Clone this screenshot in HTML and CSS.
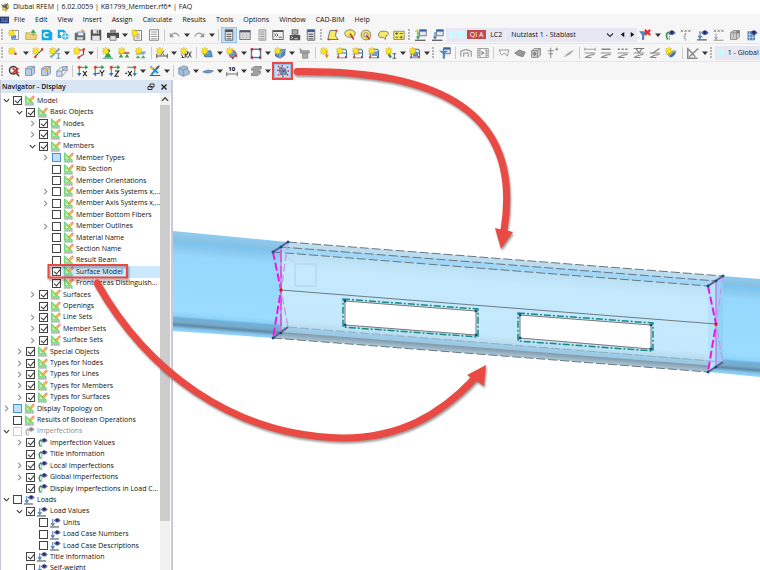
FILE: index.html
```html
<!DOCTYPE html>
<html lang="en">
<head>
    <meta charset="UTF-8">
    <meta name="viewport" content="width=device-width, initial-scale=1.0">
    <title>Dlubal RFEM</title>
    <link rel="stylesheet" href="styles.css">
</head>
<body>
    <!-- shared icon parts -->
    <svg class="defs" aria-hidden="true">
        <symbol id="star" viewBox="0 0 16 16"><path d="M5 0l1 3 3-1.500L7.500 4.500 10 5.500 7.500 6.500 9 9 6 8 5 10.500 4 8 1 9.500 2.500 6.500 0 5.500 2.500 4.500 1 1.500 4 3z" fill="#ffe81a" stroke="#d3b400" stroke-width=".6"/></symbol>
        <symbol id="eye" viewBox="0 0 16 16"><path d="M6 5q4.500-5 9 0-4.500 5-9 0z" fill="#8f96c8" stroke="#303a80"/><circle cx="10.500" cy="4.500" r="2.400" fill="#232c6b"/></symbol>
        <symbol id="model" viewBox="0 0 16 16"><path d="M2 1v11h12z" fill="#8fe88f" stroke="#4fbf5c"/><path d="M5 7v3h3z" fill="#fff"/><path d="M1 14.500h14M3 13v2M6 13v2M9 13v2M12 13v2" stroke="#7c8a86"/><path d="M7 9l1-3 4-4 2.500 2.500-4 4z" fill="#f7b93c" stroke="#a5773a" stroke-width=".5"/><path d="M12 2l1.500-1.500L16 3l-1.500 1.500z" fill="#ec8b98"/></symbol>
        <symbol id="imp" viewBox="0 0 16 16"><path d="M6 4q-5 3-1 10" fill="none" stroke="#2e9e58" stroke-width="2.200"/><path d="M7 6v9" stroke="#555" stroke-dasharray="2 1"/><use href="#eye"/></symbol>
        <symbol id="load" viewBox="0 0 16 16"><path d="M4 3v9M1.500 9L4 12.500 6.500 9" fill="none" stroke="#4b82bd" stroke-width="1.600"/><path d="M0 14.500h13" stroke="#555" stroke-width="1.600"/><use href="#eye"/></symbol>
        <symbol id="cube" viewBox="0 0 16 16"><path d="M2 5l4-3h8v9l-4 3H2z" fill="#b9cce4" stroke="#7287a5"/><path d="M2 5h8v9M10 5l4-3" fill="none" stroke="#7287a5"/></symbol>
        <symbol id="gcube" viewBox="0 0 16 16"><path d="M2 5l4-3h8v9l-4 3H2z" fill="#c9c9c9" stroke="#808080"/><path d="M2 5h8v9M10 5l4-3" fill="none" stroke="#808080"/></symbol>
        <symbol id="axis" viewBox="0 0 16 16"><path d="M3 13V3h10" fill="none" stroke="#3c8e54" stroke-width="1.400"/><path d="M0 10.500L3 15l3-4.500z" fill="#2e6fd0"/><path d="M11 0l4 3-4 3z" fill="#2f9a45"/><circle cx="3" cy="3" r="2" fill="#e0402e"/></symbol>
        <symbol id="frame" viewBox="0 0 16 16"><path d="M3 14V5l2-2h7l2 2v9M3 8h11" fill="none" stroke="#3f6ea5" stroke-width="1.400"/><path d="M1 14.500h14" stroke="#60758a"/><path d="M2 14l1-2 1 2zM12 14l1-2 1 2z" fill="#c33" stroke="#c33"/></symbol>
        <symbol id="win" viewBox="0 0 16 16"><path d="M6 1h9v8H6z" fill="#dfe9f5" stroke="#555"/><path d="M6 1h9v2.500H6z" fill="#3567a8"/></symbol>
        <symbol id="arrow-dn" viewBox="0 0 8 16"><path d="M0 6h8L4 10.500z" fill="#333"/></symbol>
        <symbol id="open" viewBox="0 0 8 8"><path d="M1 2.500l3 3 3-3" fill="none" stroke="#333" stroke-width="1.200"/></symbol>
        <symbol id="shut" viewBox="0 0 8 8"><path d="M2.500 1l3 3-3 3" fill="none" stroke="#888" stroke-width="1.200"/></symbol>
        <symbol id="diag" viewBox="0 0 16 16"><path d="M1 8h14M2 14q5-4 12-4M1 14h9" fill="none" stroke="#8a8a8a" stroke-width="1.400"/></symbol>
    </svg>

    <header class="titlebar">
        <svg class="app-icon" viewBox="0 0 16 16"><path d="M3 8l4-6 6 1 2 5-5 7-6-2z" fill="#d9a53b"/><path d="M1 3l6 3 6-5-3 7 4 3-6-1-4 4 1-6z" fill="#315f98"/><circle cx="6" cy="11" r="2.500" fill="#f1cd67"/></svg>
        <span>Dlubal RFEM | 6.02.0059 | KB1799_Member.rf6* | FAQ</span>
    </header>

    <nav class="menubar">
        <svg class="menu-icon" viewBox="0 0 16 12"><path d="M0 0h16v12H0z" fill="#263b78"/><path d="M2 4h5M2 8h12M9 4h5" stroke="#cfdcff"/></svg>
        <a href="#">File</a><a href="#">Edit</a><a href="#">View</a><a href="#">Insert</a><a href="#">Assign</a><a href="#">Calculate</a><a href="#">Results</a><a href="#">Tools</a><a href="#">Options</a><a href="#">Window</a><a href="#">CAD-BIM</a><a href="#">Help</a>
    </nav>

    <!-- file / load case toolbar -->
    <div class="toolbar">
        <i class="grip"></i>
        <button aria-label="New"><svg viewBox="0 0 16 16"><path d="M5 2h9v12H5z" fill="#fff" stroke="#777"/><path d="M4 8h7v5H4z" fill="#5a94cf"/><use href="#star"/></svg></button>
        <button aria-label="Open"><svg viewBox="0 0 16 16"><path d="M1 5h5l1 2h8v7H1z" fill="#efd27e" stroke="#c2a14b"/><path d="M11 9V3M8 5l3-4 3 4z" fill="#39a64a" stroke="#39a64a"/></svg></button>
        <button aria-label="Dlubal Center"><svg viewBox="0 0 16 16"><path d="M1 1h10l4 4v10H1z" fill="#14a9dd"/><path d="M10 5H7a3 3 0 0 0 0 6h3" fill="none" stroke="#fff" stroke-width="2"/></svg></button>
        <button aria-label="Block"><svg viewBox="0 0 16 16"><path d="M1 1h8l3 3v8H1z" fill="#14a9dd"/><circle cx="6" cy="6" r="2.500" fill="#fff"/><circle cx="11" cy="10" r="5" fill="#48b8df" stroke="#fff"/><path d="M7 10h8M11 6v8" stroke="#fff"/></svg></button>
        <button aria-label="Save package"><svg viewBox="0 0 16 16"><path d="M1 5h14v10H1z" fill="#6c6c6c"/><path d="M5 4h8v5H5z" fill="#e6ebf1" stroke="#5076a5"/><path d="M4 11h8v3H4z" fill="#ddd"/><path d="M10 1l4 3" stroke="#dc8a30" stroke-width="2"/></svg></button>
        <button aria-label="Save"><svg viewBox="0 0 16 16"><path d="M1 1h14v14H1z" fill="#575757"/><path d="M4 1h8v5H4zM3 9h10v6H3z" fill="#e5e5e5"/><path d="M9 2h2v3H9z" fill="#555"/></svg></button>
        <button aria-label="Print"><svg viewBox="0 0 16 16"><path d="M4 1h8v4H4z" fill="#888"/><path d="M0 5h16v7H0z" fill="#4d4d4d"/><path d="M4 9h8v6H4z" fill="#e4e4e4" stroke="#666"/></svg></button>
        <button class="drop" aria-label="Print options"><svg viewBox="0 0 8 16"><use href="#arrow-dn"/></svg></button>
        <button aria-label="New report"><svg viewBox="0 0 16 16"><path d="M4 2h10v13H4z" fill="#fff" stroke="#555"/><path d="M6 7h6M6 9.500h6M6 12h6" stroke="#777"/><use href="#star"/></svg></button>
        <button aria-label="Report"><svg viewBox="0 0 16 16"><path d="M2 1h12v14H2z" fill="#fff" stroke="#666"/><path d="M4 4h8M4 7h8M4 10h8M4 13h8" stroke="#777"/></svg></button>
        <i class="sep"></i>
        <button aria-label="Undo"><svg viewBox="0 0 16 16"><path d="M3 8q6-6 11 2" fill="none" stroke="#999" stroke-width="1.600"/><path d="M1 5v6h6z" fill="#999"/></svg></button>
        <button class="drop" aria-label="Undo list"><svg viewBox="0 0 8 16"><use href="#arrow-dn"/></svg></button>
        <button aria-label="Redo"><svg viewBox="0 0 16 16"><path d="M2 10q5-8 11-2" fill="none" stroke="#999" stroke-width="1.600"/><path d="M15 5v6H9z" fill="#999"/></svg></button>
        <button class="drop" aria-label="Redo list"><svg viewBox="0 0 8 16"><use href="#arrow-dn"/></svg></button>
        <i class="sep"></i>
        <button class="on" aria-label="Navigator"><svg viewBox="0 0 16 16"><path d="M3 1h10v14H3z" fill="#ddd" stroke="#555"/><path d="M3 1h10v3H3z" fill="#555"/><path d="M5 7h6M5 10h6M5 13h6" stroke="#666" stroke-width="1.500"/></svg></button>
        <button aria-label="Tables"><svg viewBox="0 0 16 16"><path d="M1 2h14v12H1z" fill="#e2e2e2" stroke="#555"/><path d="M1 2h14v2.500H1z" fill="#4b5b75"/><path d="M1 8h14M1 11h14M5 5v9M10 5v9" stroke="#bbb"/></svg></button>
        <button aria-label="Panel"><svg viewBox="0 0 16 16"><path d="M4 1h9v14H4z" fill="#ddd" stroke="#888"/><path d="M6 4h5M6 7h5M6 10h5M6 13h5" stroke="#999" stroke-width="1.500"/></svg></button>
        <button aria-label="Console"><svg viewBox="0 0 16 16"><path d="M1 2h14v12H1z" fill="#eee" stroke="#444"/><path d="M1 2h14v2H1z" fill="#555"/><path d="M3 6l2 2-2 2M6 6l2 2-2 2M9 11h4" fill="none" stroke="#333"/></svg></button>
        <button aria-label="Script"><svg viewBox="0 0 16 16"><path d="M4 1h8v6H4z" fill="#aaa" stroke="#555"/><path d="M1 8h14v7H1z" fill="#555"/><path d="M3 10l2 1.500L3 13M7 13h5" stroke="#fff" fill="none"/></svg></button>
        <button aria-label="Server"><svg viewBox="0 0 16 16"><path d="M3 1h10v14H3z" fill="#d5dde8" stroke="#555"/><path d="M3 1h10v3H3z" fill="#3b5f92"/><path d="M5 7h6M5 10h6M5 13h6" stroke="#555" stroke-width="1.500"/></svg></button>
        <i class="grip"></i>
        <button aria-label="Polygon"><svg viewBox="0 0 16 16"><path d="M4 2h9l-2 7 4 5H1z" fill="#f5ea6a" stroke="#555"/><path d="M1 14h3M11 2h3" stroke="#c33" stroke-width="2"/></svg></button>
        <button aria-label="Ellipse"><svg viewBox="0 0 16 16"><ellipse cx="8" cy="6" rx="7" ry="5" fill="#f5ea6a" stroke="#665"/><path d="M8 6l5 8" stroke="#c33" stroke-width="2"/></svg></button>
        <button aria-label="Circle"><svg viewBox="0 0 16 16"><circle cx="8" cy="8" r="6.500" fill="#f5ea6a" stroke="#665"/><circle cx="8" cy="8" r="3" fill="#f5f5f5" stroke="#665"/><path d="M8 8l5 6" stroke="#c33" stroke-width="2"/></svg></button>
        <button aria-label="Lasso"><svg viewBox="0 0 16 16"><path d="M2 8q0-6 8-5 6 0 5 4-1 2-3 2l-1 5-3-3q-6 1-6-3z" fill="#f5ea6a" stroke="#665"/></svg></button>
        <button aria-label="Area"><svg viewBox="0 0 16 16"><path d="M1 3h14v11H1z" fill="#f5ea6a" stroke="#776"/><path d="M3 6h4M5 4v4M9 6h4M3 11h4M9 11h4M11 9v4" stroke="#444"/></svg></button>
        <i class="grip"></i>
        <button aria-label="New load"><svg viewBox="0 0 16 16"><path d="M4 4v9M2 10l2 3 2-3" stroke="#3a9b4c" fill="none" stroke-width="1.500"/><path d="M0 15h14" stroke="#444" stroke-width="1.500"/><use href="#win"/><path d="M0 3h6M3 0v6" stroke="#e6c400" stroke-width="1.500"/></svg></button>
        <button aria-label="Load case"><svg viewBox="0 0 16 16"><path d="M4 4v9M2 10l2 3 2-3" stroke="#3b77b5" fill="none" stroke-width="1.500"/><path d="M0 15h14" stroke="#444" stroke-width="1.500"/><use href="#win"/></svg></button>
        <div class="loadcase">
            <i class="swatch"></i><i class="swatch"></i><span class="badge">QI A</span><label for="lc">LC2</label>
            <select id="lc"><option>Nutzlast 1 - Stablast</option></select>
            <svg class="chevron"><use href="#open"/></svg>
            <button aria-label="Previous"><svg viewBox="0 0 8 8"><path d="M6 1v6L2 4z" fill="#111"/></svg></button>
            <button aria-label="Next"><svg viewBox="0 0 8 8"><path d="M2 1v6l4-3z" fill="#111"/></svg></button>
        </div>
        <button aria-label="Clear filter"><svg viewBox="0 0 16 16"><path d="M0 3h11L7 8v6l-3 1V8z" fill="#4f86c0"/><path d="M8 1l7 7M15 1L8 8" stroke="#e5261f" stroke-width="2.500"/></svg></button>
        <button class="drop" aria-label="Filter list"><svg viewBox="0 0 8 16"><use href="#arrow-dn"/></svg></button>
        <button aria-label="Imperfections"><svg viewBox="0 0 16 16"><use href="#imp"/></svg></button>
        <button aria-label="Imperfection values"><svg viewBox="0 0 16 16"><path d="M1 1l3 3M4 1L1 4M6 1l3 3M9 1L6 4M11 1l3 3M14 1l-3 3" stroke="#777"/><path d="M8 6q-4 4 0 9" stroke="#888" stroke-width="2" fill="none" stroke-dasharray="2 1"/></svg></button>
        <button aria-label="Loads"><svg viewBox="0 0 16 16"><use href="#load"/></svg></button>
        <button aria-label="Load values"><svg viewBox="0 0 16 16"><path d="M1 1l3 3M4 1L1 4M6 1l3 3M9 1L6 4M11 1l3 3M14 1l-3 3M4 6v7M1 15h13M2 11l2 3 2-3" stroke="#777" fill="none"/></svg></button>
        <button aria-label="Results off"><svg viewBox="0 0 16 16"><use href="#gcube"/><path d="M6 2v9M10 2v9" stroke="#999"/><circle cx="12" cy="4" r="2" fill="#777"/></svg></button>
        <button aria-label="Result values"><svg viewBox="0 0 16 16"><path d="M2 3h10v12H2z" fill="#5086bb"/><path d="M2 7h10M2 11h10M5 3v12M9 3v12" stroke="#c5def2"/><use href="#eye"/></svg></button>
    </div>

    <!-- insert toolbar -->
    <div class="toolbar">
        <i class="grip"></i>
        <button aria-label="New node"><svg viewBox="0 0 16 16"><use href="#star"/><circle cx="10" cy="9" r="1.800" fill="#d3302a"/></svg></button>
        <button class="drop" aria-label="Nodes"><svg viewBox="0 0 8 16"><use href="#arrow-dn"/></svg></button>
        <button aria-label="New line"><svg viewBox="0 0 16 16"><path d="M4 13L14 3" stroke="#333" stroke-width="1.400"/><path d="M3 13h3M12 3h3" stroke="#d33" stroke-width="3"/><use href="#star"/></svg></button>
        <button aria-label="New member"><svg viewBox="0 0 16 16"><path d="M2 14L14 2" stroke="#7fa5cc" stroke-width="3"/><path d="M10 9h5M12.500 9v6M10 15h5" stroke="#4375ac"/><use href="#star"/></svg></button>
        <button class="drop" aria-label="Members"><svg viewBox="0 0 8 16"><use href="#arrow-dn"/></svg></button>
        <button aria-label="Polyline"><svg viewBox="0 0 16 16"><path d="M4 4h10v6L7 14" fill="none" stroke="#b33" stroke-width="1.600"/><path d="M13 3h3M6 14h3" stroke="#d33" stroke-width="3"/><use href="#star"/></svg></button>
        <button class="drop" aria-label="Lines"><svg viewBox="0 0 8 16"><use href="#arrow-dn"/></svg></button>
        <i class="sep"></i>
        <button aria-label="Nodal support"><svg viewBox="0 0 16 16"><path d="M3 14l5-8 5 8z" fill="#2fa24a"/><path d="M1 15h14" stroke="#286"/><circle cx="9" cy="5" r="2" fill="#287a3b"/><use href="#star"/></svg></button>
        <button aria-label="Line support"><svg viewBox="0 0 16 16"><path d="M1 8h14" stroke="#c33" stroke-width="2"/><path d="M1 14l3-5 3 5zM9 14l3-5 3 5z" fill="#2fa24a"/><use href="#star"/></svg></button>
        <button aria-label="Surface support"><svg viewBox="0 0 16 16"><path d="M1 10l4-4h10l-3 4z" fill="#79a7d3"/><path d="M1 15l3-4 3 4zM8 15l3-4 3 4z" fill="#4da565"/><use href="#star"/></svg></button>
        <i class="sep"></i>
        <button aria-label="Dimension"><svg viewBox="0 0 16 16"><path d="M1 9v6M15 9v6M1 12h14M6 5l5 6M11 5l-5 6" stroke="#444" stroke-width="1.200"/><use href="#star"/></svg></button>
        <button class="drop" aria-label="Dimensions"><svg viewBox="0 0 8 16"><use href="#arrow-dn"/></svg></button>
        <button aria-label="Note"><svg viewBox="0 0 16 16"><path d="M4 14l-2-4M2 14h4M7 14V6h3v4H7l3 4M11 6l4 8M15 6l-4 8" fill="none" stroke="#333" stroke-width="1.200"/><use href="#star"/></svg></button>
        <i class="sep"></i>
        <button aria-label="Surface"><svg viewBox="0 0 16 16"><path d="M3 6l10-1 2 8H5z" fill="#5d97cf" stroke="#345f91"/><use href="#star"/></svg></button>
        <button class="drop" aria-label="Surfaces"><svg viewBox="0 0 8 16"><use href="#arrow-dn"/></svg></button>
        <button aria-label="Curved surface"><svg viewBox="0 0 16 16"><path d="M5 5q8-3 9 6l-5 4q-7-2-4-10z" fill="#6c91c0" stroke="#a33"/><path d="M12 12h3M8 15h2" stroke="#c22" stroke-width="2"/><use href="#star"/></svg></button>
        <button class="drop" aria-label="Curved surfaces"><svg viewBox="0 0 8 16"><use href="#arrow-dn"/></svg></button>
        <button aria-label="Opening"><svg viewBox="0 0 16 16"><path d="M2 3h12v11H2z" fill="#fff" stroke="#4d80b5" stroke-width="2"/><path d="M1 3h3M12 3h3M1 14h3M12 14h3" stroke="#c22" stroke-width="3"/></svg></button>
        <button class="drop" aria-label="Openings"><svg viewBox="0 0 8 16"><use href="#arrow-dn"/></svg></button>
        <button aria-label="Solid"><svg viewBox="0 0 16 16"><path d="M2 7l6-3 7-1-1 8-6 4-6-3z" fill="#5289bf" stroke="#35628e"/><path d="M8 8v7M8 8l7-5" stroke="#bdd8ef"/><use href="#star"/></svg></button>
        <button class="drop" aria-label="Solids"><svg viewBox="0 0 8 16"><use href="#arrow-dn"/></svg></button>
        <button aria-label="Block solid"><svg viewBox="0 0 16 16"><path d="M3 5h12v3H3zM6 8h7v7H6z" fill="#ababab" stroke="#888"/><path d="M2 2l4 4" stroke="#999" stroke-width="2"/></svg></button>
        <i class="sep"></i>
        <button aria-label="Nodal load"><svg viewBox="0 0 16 16"><path d="M9 4v9M7 10l2 4 2-4" stroke="#d39b1e" fill="none" stroke-width="1.600"/><use href="#star"/></svg></button>
        <button aria-label="Member load"><svg viewBox="0 0 16 16"><use href="#frame"/><use href="#star"/></svg></button>
        <button aria-label="Line load"><svg viewBox="0 0 16 16"><use href="#frame"/><path d="M6 5v5M9 5v5" stroke="#c44"/><use href="#star"/></svg></button>
        <button aria-label="Surface load"><svg viewBox="0 0 16 16"><use href="#frame"/><path d="M5 8l8-3v7H5z" fill="#6f9dcb"/><use href="#star"/></svg></button>
        <button aria-label="Imperfection"><svg viewBox="0 0 16 16"><path d="M7 3q-5 5 1 11" stroke="#2e8e4b" stroke-width="3" fill="none"/><path d="M10 9h5M12.500 9v6M10 15h5" stroke="#333"/><use href="#star"/></svg></button>
        <button class="drop" aria-label="More imperfections"><svg viewBox="0 0 8 16"><use href="#arrow-dn"/></svg></button>
        <button aria-label="Load wizard"><svg viewBox="0 0 16 16"><use href="#frame"/><path d="M7 4l5 4v5H5z" fill="#5689bd"/><use href="#star"/></svg></button>
        <button class="drop" aria-label="Load wizards"><svg viewBox="0 0 8 16"><use href="#arrow-dn"/></svg></button>
        <i class="grip"></i>
        <button aria-label="Result filter"><svg viewBox="0 0 16 16"><use href="#win"/><path d="M0 5h12L8 9v6l-3 1V9z" fill="#5289c2"/></svg></button>
        <i class="sep"></i>
        <button aria-label="Deformation"><svg viewBox="0 0 16 16"><path d="M1 13V6q7-5 14 0v7M5 13V8h6v5" fill="none" stroke="#999" stroke-width="1.500"/></svg></button>
        <button aria-label="Animation"><svg viewBox="0 0 16 16"><path d="M1 2h14v12H1zM4 2v12M12 2v12M1 5h3M1 8h3M1 11h3M12 5h3M12 8h3M12 11h3" fill="none" stroke="#888"/><path d="M6 5l4 3-4 3z" fill="#888"/></svg></button>
        <i class="sep"></i>
        <button aria-label="Member results"><svg viewBox="0 0 16 16"><path d="M1 4h14M2 4q2 9 4 6t4-1q3 8 4-5" fill="none" stroke="#999" stroke-width="1.300"/></svg></button>
        <button aria-label="Surface results"><svg viewBox="0 0 16 16"><path d="M1 8l6-4 8 3-3 6-7-2z" fill="#999" stroke="#777"/></svg></button>
        <button aria-label="Solid results"><svg viewBox="0 0 16 16"><use href="#gcube"/><circle cx="6" cy="9" r="2.500" fill="#888"/></svg></button>
        <button aria-label="Sections"><svg viewBox="0 0 16 16"><path d="M5 1v14M1 5h8M2 9h6M11 3h4M13 1v4" stroke="#888" stroke-width="1.300"/></svg></button>
        <button aria-label="Clipping"><svg viewBox="0 0 16 16"><path d="M1 14Q6 6 15 4L9 10z" fill="#a9a9a9"/></svg></button>
        <i class="sep"></i>
        <button aria-label="Diagram 1"><svg viewBox="0 0 16 16"><path d="M1 3h14M1 1v4M15 1v4" stroke="#888"/><use href="#diag"/></svg></button>
        <button aria-label="Diagram 2"><svg viewBox="0 0 16 16"><path d="M2 3h12" stroke="#888" stroke-width="2"/><use href="#diag"/></svg></button>
        <button aria-label="Diagram 3"><svg viewBox="0 0 16 16"><path d="M1 3h14" stroke="#888" stroke-width="2" stroke-dasharray="3 2"/><use href="#diag"/></svg></button>
        <button aria-label="Diagram 4"><svg viewBox="0 0 16 16"><path d="M1 2h14M4 2l4 6M12 2L8 8" stroke="#777" stroke-width="1.500"/><use href="#diag"/></svg></button>
        <button aria-label="Diagram 5"><svg viewBox="0 0 16 16"><path d="M4 9l10-7" stroke="#888" stroke-width="2"/><use href="#diag"/></svg></button>
        <button aria-label="New section"><svg viewBox="0 0 16 16"><path d="M3 10q6-7 12-5-1 8-8 9z" fill="#3c70c4"/><path d="M5 12q4-6 10-7" stroke="#f0d23c" fill="none" stroke-width="1.500"/><use href="#star"/></svg></button>
        <i class="sep"></i>
        <button aria-label="Result display"><svg viewBox="0 0 16 16"><path d="M1 1v14h13M2 3l9 10M3 13L15 2" fill="none" stroke="#888" stroke-width="2"/></svg></button>
        <button class="drop" aria-label="Result displays"><svg viewBox="0 0 8 16"><use href="#arrow-dn"/></svg></button>
        <i class="grip"></i>
        <div class="coord"><i class="swatch"></i><label for="cs" class="hidden">System</label><select id="cs"><option>1 - Global</option></select></div>
    </div>

    <!-- view toolbar -->
    <div class="toolbar view">
        <i class="grip"></i>
        <button aria-label="Zoom off"><svg viewBox="0 0 16 16"><circle cx="7" cy="7" r="5" fill="#eee" stroke="#444" stroke-width="2"/><path d="M11 11l4 4" stroke="#444" stroke-width="2"/><path d="M6 4l8 7M14 4l-8 7" stroke="#d92a22" stroke-width="2.200"/></svg></button>
        <button aria-label="Show all"><svg viewBox="0 0 16 16"><use href="#cube"/></svg></button>
        <button aria-label="Previous view"><svg viewBox="0 0 16 16"><use href="#cube"/><path d="M9 3l3 1-4 5-2-1z" fill="#eeb33e"/></svg></button>
        <button aria-label="Perspective"><svg viewBox="0 0 16 16"><path d="M1 8h7v7H1zM9 2h6v5H9zM1 8l8-6M8 8l7-6M8 15l7-8" fill="#cfdcee" stroke="#6f81a0"/></svg></button>
        <i class="sep"></i>
        <button aria-label="View X"><svg viewBox="0 0 16 16"><use href="#axis"/><path d="M8 8l5 7M13 8l-5 7" stroke="#222" stroke-width="1.500"/></svg></button>
        <button aria-label="View -Y"><svg viewBox="0 0 16 16"><use href="#axis"/><path d="M6 11h3M9 7l3 4 3-4M12 11v4" fill="none" stroke="#222" stroke-width="1.500"/></svg></button>
        <button aria-label="View Z"><svg viewBox="0 0 16 16"><use href="#axis"/><path d="M8 8h5l-5 7h5" fill="none" stroke="#222" stroke-width="1.500"/></svg></button>
        <button aria-label="View -X"><svg viewBox="0 0 16 16"><path d="M3 3h10v10" fill="none" stroke="#3c8e54" stroke-width="1.400"/><path d="M10 11l3 4 3-4z" fill="#2e6fd0"/><circle cx="13" cy="3" r="2" fill="#e0402e"/><path d="M0 11h3M4 8l5 7M9 8l-5 7" stroke="#222" stroke-width="1.500"/></svg></button>
        <button class="drop" aria-label="Views"><svg viewBox="0 0 8 16"><use href="#arrow-dn"/></svg></button>
        <button aria-label="Work plane"><svg viewBox="0 0 16 16"><path d="M2 2l10 9M13 2L3 13" stroke="#2690cf" stroke-width="2.500"/><path d="M1 14h14M9 5l5-4" stroke="#555" stroke-width="1.500"/><circle cx="4" cy="4" r="2" fill="#e4c421"/></svg></button>
        <button class="drop" aria-label="Work planes"><svg viewBox="0 0 8 16"><use href="#arrow-dn"/></svg></button>
        <i class="sep"></i>
        <button aria-label="Render mode"><svg viewBox="0 0 16 16"><path d="M1 4l7-3 5 2v4l2 1v4l-8 3-6-3z" fill="#a5bdd7" stroke="#6e8cae"/><path d="M7 7v8M1 4l6 3 6-3" fill="none" stroke="#6e8cae"/></svg></button>
        <button class="drop" aria-label="Render modes"><svg viewBox="0 0 8 16"><use href="#arrow-dn"/></svg></button>
        <button aria-label="Plane"><svg viewBox="0 0 16 16"><path d="M1 9q7-4 14-1-6 5-14 1z" fill="#6c9ed0" stroke="#54789c"/></svg></button>
        <button class="drop" aria-label="Planes"><svg viewBox="0 0 8 16"><use href="#arrow-dn"/></svg></button>
        <button aria-label="Dimension values"><svg viewBox="0 0 16 16"><path d="M1 9v6M15 9v6M1 12h14" stroke="#444"/><text x="3" y="8" class="icon-text">10</text></svg></button>
        <button class="drop" aria-label="Dimension options"><svg viewBox="0 0 8 16"><use href="#arrow-dn"/></svg></button>
        <button aria-label="Members display"><svg viewBox="0 0 16 16"><path d="M2 5l4-3h9v3l-4 1v2h3v3l-4 3H2v-3h3V7H2z" fill="#a2a2a2" stroke="#777"/></svg></button>
        <button class="drop" aria-label="Member displays"><svg viewBox="0 0 8 16"><use href="#arrow-dn"/></svg></button>
        <button class="on marked" aria-label="Surface model"><svg viewBox="0 0 16 16"><path d="M4 3l7 2 2 7-8 1-2-5z" fill="#8a9dbd" stroke="#5c6a88"/><path d="M4 3l9 9M11 5l-6 8M3 8h9" stroke="#4c5974"/><path d="M1 2h2M6 1h2M13 3h2M1 13h2M7 15h2M13 13h2M14 8h2M0 7h2" stroke="#d42a2a" stroke-width="2"/></svg></button>
    </div>

    <main class="workspace">
        <aside class="navigator">
            <div class="nav-head">
                <span>Navigator - Display</span>
                <button aria-label="Float"><svg viewBox="0 0 8 8"><path d="M3 1h4v3H3zM1 3.500h4v3H1z" fill="#d8e6f4" stroke="#333"/></svg></button>
                <button aria-label="Close"><svg viewBox="0 0 8 8"><path d="M1.500 1.500l5 5M6.500 1.500l-5 5" stroke="#222" stroke-width="1.400"/></svg></button>
            </div>
            <div class="nav-body">
                <ul class="tree">
                    <li><svg class="tw"><use href="#open"/></svg><label><input type="checkbox" checked><svg class="ic"><use href="#model"/></svg><span>Model</span></label></li>
                    <li class="d1"><svg class="tw"><use href="#open"/></svg><label><input type="checkbox" checked><svg class="ic"><use href="#model"/></svg><span>Basic Objects</span></label></li>
                    <li class="d2"><svg class="tw"><use href="#shut"/></svg><label><input type="checkbox" checked><svg class="ic"><use href="#model"/></svg><span>Nodes</span></label></li>
                    <li class="d2"><svg class="tw"><use href="#shut"/></svg><label><input type="checkbox" checked><svg class="ic"><use href="#model"/></svg><span>Lines</span></label></li>
                    <li class="d2"><svg class="tw"><use href="#open"/></svg><label><input type="checkbox" checked><svg class="ic"><use href="#model"/></svg><span>Members</span></label></li>
                    <li class="d3"><svg class="tw"><use href="#shut"/></svg><label><input type="checkbox" class="part"><svg class="ic"><use href="#model"/></svg><span>Member Types</span></label></li>
                    <li class="d3"><svg class="tw"></svg><label><input type="checkbox"><svg class="ic"><use href="#model"/></svg><span>Rib Section</span></label></li>
                    <li class="d3"><svg class="tw"></svg><label><input type="checkbox"><svg class="ic"><use href="#model"/></svg><span>Member Orientations</span></label></li>
                    <li class="d3"><svg class="tw"><use href="#shut"/></svg><label><input type="checkbox"><svg class="ic"><use href="#model"/></svg><span>Member Axis Systems x,...</span></label></li>
                    <li class="d3"><svg class="tw"><use href="#shut"/></svg><label><input type="checkbox"><svg class="ic"><use href="#model"/></svg><span>Member Axis Systems x,...</span></label></li>
                    <li class="d3"><svg class="tw"></svg><label><input type="checkbox"><svg class="ic"><use href="#model"/></svg><span>Member Bottom Fibers</span></label></li>
                    <li class="d3"><svg class="tw"><use href="#shut"/></svg><label><input type="checkbox"><svg class="ic"><use href="#model"/></svg><span>Member Outlines</span></label></li>
                    <li class="d3"><svg class="tw"></svg><label><input type="checkbox"><svg class="ic"><use href="#model"/></svg><span>Material Name</span></label></li>
                    <li class="d3"><svg class="tw"></svg><label><input type="checkbox"><svg class="ic"><use href="#model"/></svg><span>Section Name</span></label></li>
                    <li class="d3"><svg class="tw"></svg><label><input type="checkbox"><svg class="ic"><use href="#model"/></svg><span>Result Beam</span></label></li>
                    <li class="d3 selected"><svg class="tw"></svg><label><input type="checkbox" checked><svg class="ic"><use href="#model"/></svg><span>Surface Model</span></label></li>
                    <li class="d3"><svg class="tw"></svg><label><input type="checkbox" checked><svg class="ic"><use href="#model"/></svg><span>Front Areas Distinguish...</span></label></li>
                    <li class="d2"><svg class="tw"><use href="#shut"/></svg><label><input type="checkbox" checked><svg class="ic"><use href="#model"/></svg><span>Surfaces</span></label></li>
                    <li class="d2"><svg class="tw"></svg><label><input type="checkbox" checked><svg class="ic"><use href="#model"/></svg><span>Openings</span></label></li>
                    <li class="d2"><svg class="tw"><use href="#shut"/></svg><label><input type="checkbox" checked><svg class="ic"><use href="#model"/></svg><span>Line Sets</span></label></li>
                    <li class="d2"><svg class="tw"><use href="#shut"/></svg><label><input type="checkbox" checked><svg class="ic"><use href="#model"/></svg><span>Member Sets</span></label></li>
                    <li class="d2"><svg class="tw"><use href="#shut"/></svg><label><input type="checkbox" checked><svg class="ic"><use href="#model"/></svg><span>Surface Sets</span></label></li>
                    <li class="d1"><svg class="tw"><use href="#shut"/></svg><label><input type="checkbox" checked><svg class="ic"><use href="#model"/></svg><span>Special Objects</span></label></li>
                    <li class="d1"><svg class="tw"><use href="#shut"/></svg><label><input type="checkbox" checked><svg class="ic"><use href="#model"/></svg><span>Types for Nodes</span></label></li>
                    <li class="d1"><svg class="tw"><use href="#shut"/></svg><label><input type="checkbox" checked><svg class="ic"><use href="#model"/></svg><span>Types for Lines</span></label></li>
                    <li class="d1"><svg class="tw"><use href="#shut"/></svg><label><input type="checkbox" checked><svg class="ic"><use href="#model"/></svg><span>Types for Members</span></label></li>
                    <li class="d1"><svg class="tw"><use href="#shut"/></svg><label><input type="checkbox" checked><svg class="ic"><use href="#model"/></svg><span>Types for Surfaces</span></label></li>
                    <li><svg class="tw"><use href="#shut"/></svg><label><input type="checkbox" class="part"><svg class="ic"><use href="#model"/></svg><span>Display Topology on</span></label></li>
                    <li><svg class="tw"></svg><label><input type="checkbox"><svg class="ic"><use href="#model"/></svg><span>Results of Boolean Operations</span></label></li>
                    <li class="off"><svg class="tw"><use href="#open"/></svg><label><input type="checkbox" disabled><svg class="ic"><use href="#imp"/></svg><span>Imperfections</span></label></li>
                    <li class="d1"><svg class="tw"><use href="#shut"/></svg><label><input type="checkbox" checked><svg class="ic"><use href="#imp"/></svg><span>Imperfection Values</span></label></li>
                    <li class="d1"><svg class="tw"></svg><label><input type="checkbox" checked><svg class="ic"><use href="#imp"/></svg><span>Title Information</span></label></li>
                    <li class="d1"><svg class="tw"><use href="#shut"/></svg><label><input type="checkbox" checked><svg class="ic"><use href="#imp"/></svg><span>Local Imperfections</span></label></li>
                    <li class="d1"><svg class="tw"><use href="#shut"/></svg><label><input type="checkbox" checked><svg class="ic"><use href="#imp"/></svg><span>Global Imperfections</span></label></li>
                    <li class="d1"><svg class="tw"></svg><label><input type="checkbox" checked><svg class="ic"><use href="#imp"/></svg><span>Display Imperfections in Load C...</span></label></li>
                    <li><svg class="tw"><use href="#open"/></svg><label><input type="checkbox"><svg class="ic"><use href="#load"/></svg><span>Loads</span></label></li>
                    <li class="d1"><svg class="tw"><use href="#open"/></svg><label><input type="checkbox" checked><svg class="ic"><use href="#load"/></svg><span>Load Values</span></label></li>
                    <li class="d2"><svg class="tw"></svg><label><input type="checkbox"><svg class="ic"><use href="#load"/></svg><span>Units</span></label></li>
                    <li class="d2"><svg class="tw"></svg><label><input type="checkbox"><svg class="ic"><use href="#load"/></svg><span>Load Case Numbers</span></label></li>
                    <li class="d2"><svg class="tw"></svg><label><input type="checkbox"><svg class="ic"><use href="#load"/></svg><span>Load Case Descriptions</span></label></li>
                    <li class="d1"><svg class="tw"></svg><label><input type="checkbox" checked><svg class="ic"><use href="#load"/></svg><span>Title Information</span></label></li>
                    <li class="d1"><svg class="tw"></svg><label><input type="checkbox"><svg class="ic"><use href="#load"/></svg><span>Self-weight</span></label></li>
                </ul>
                <div class="scrollbar">
                    <svg viewBox="0 0 8 8"><path d="M1.500 5.500L4 3l2.500 2.500" fill="none" stroke="#444"/></svg>
                    <div class="thumb"></div>
                    <div class="rest"></div>
                </div>
            </div>
        </aside>

        <section class="viewport">
            <svg viewBox="173 80 587 490" preserveAspectRatio="xMinYMin slice">
                <defs>
                    <linearGradient id="solid" gradientUnits="userSpaceOnUse" x1="0" y1="217" x2="0" y2="317" gradientTransform="skewY(4.470)">
                        <stop offset="0" stop-color="#8fcdf1"/><stop offset=".11" stop-color="#86c0e2"/><stop offset=".12" stop-color="#76c6fb"/><stop offset=".15" stop-color="#88c6ec"/><stop offset=".25" stop-color="#96d8fd"/><stop offset=".8" stop-color="#9adcff"/><stop offset=".85" stop-color="#8dd2fa"/><stop offset=".87" stop-color="#70b0da"/><stop offset=".91" stop-color="#76abc9"/><stop offset=".94" stop-color="#5f89a6"/><stop offset=".97" stop-color="#83c3ea"/><stop offset="1" stop-color="#94d6fb"/>
                    </linearGradient>
                    <linearGradient id="clear" gradientUnits="userSpaceOnUse" x1="0" y1="217" x2="0" y2="317" gradientTransform="skewY(4.470)">
                        <stop offset="0" stop-color="#bcdef1"/><stop offset=".07" stop-color="#bbdcee"/><stop offset=".08" stop-color="#a3d7f7"/><stop offset=".135" stop-color="#a3d7f7"/><stop offset=".14" stop-color="#bce0f3"/><stop offset=".28" stop-color="#c5e9fd"/><stop offset=".8" stop-color="#c5e9fc"/><stop offset=".875" stop-color="#b8dced"/><stop offset=".88" stop-color="#9fcdea"/><stop offset=".925" stop-color="#9bc8e3"/><stop offset=".935" stop-color="#849cac"/><stop offset="1" stop-color="#aecbdd"/>
                    </linearGradient>
                </defs>
                <path d="M173 231L288 242 281 290 273 338 173 331z" fill="url(#solid)"/>
                <path d="M723 276L760 279V377L708 372 716 324z" fill="url(#solid)"/>
                <path d="M288 242L723 276 716 281V366L708 372 273 338 281 332V247z" fill="url(#clear)"/>
                <path d="M273 252L281 247V332L273 338z" fill="url(#solid)"/>
                <path d="M708 286L716 281V366L708 372z" fill="#b7e2fb"/>
                <path d="M716 281L723 276V362L716 366z" fill="#92d2f8"/>
                <g fill="none" stroke="#69767e">
                    <path d="M288 242L723 276M281 247L716 281M273 252L708 286M273 338L708 372" stroke-dasharray="9 3"/>
                    <path d="M288 327L723 362" stroke="#8fb0c2" stroke-dasharray="9 3"/>
                    <path d="M281 290L716 324" stroke="#707b81"/>
                    <path d="M295 264h21v22h-21zM284 253l11 10" stroke="#b1d2e3"/>
                    <path d="M288 242L273 252M288 327L273 338M723 276L708 286M723 362L708 372" stroke="#615987" stroke-width="2"/>
                </g>
                <g fill="#fff" stroke="#777">
                    <path d="M345 301L476 311V335L345 325zM520 315L651 325V349L520 338z"/>
                    <path d="M343 299L478 309V337L343 327zM518 313L653 323V351L518 341z" fill="none" stroke="#148b88" stroke-width="1.500" stroke-dasharray="7 2 2 2"/>
                </g>
                <g fill="none" stroke="#c184df" stroke-width="1.500">
                    <path d="M281 247V332M716 281V366"/>
                    <path d="M288 242L281 290 288 327M723 276L716 324 723 362" stroke="#bfa0ee" stroke-dasharray="8 3"/>
                    <path d="M273 252L281 290 273 338M708 286L716 324 708 372" stroke="#ee16e4" stroke-width="2" stroke-dasharray="8 3"/>
                    <path d="M281 250V332" stroke="#d94fd8" stroke-dasharray="12 4"/>
                </g>
                <path d="M272 251h2v2h-2zM280 246h2v2h-2zM287 241h2v2h-2zM272 337h2v2h-2zM280 332h2v2h-2zM707 285h2v2h-2zM715 280h2v2h-2zM722 275h2v2h-2zM707 371h2v2h-2zM715 366h2v2h-2zM344 300h2v2h-2zM475 310h2v2h-2zM475 334h2v2h-2zM344 324h2v2h-2zM519 314h2v2h-2zM650 324h2v2h-2zM650 348h2v2h-2zM519 337h2v2h-2z" fill="#164f83" stroke="#164f83" stroke-width=".6"/>
                <path d="M280 289h2v2h-2zM715 323h2v2h-2z" fill="#f00f18" stroke="#f00f18"/>
            </svg>
        </section>
    </main>

    <!-- callout arrows over the window -->
    <svg class="callouts" viewBox="0 0 760 570" aria-hidden="true">
        <g fill="none" stroke="#e94b44" stroke-width="7" stroke-linecap="round">
            <path d="M297 71.500C420 70 525 100 504 230"/>
            <path d="M97 283C145 368 230 436 343 438 400 438 440 415 474 379"/>
        </g>
        <path d="M495 228L513 232 501 249zM467 375L484 386 486 365z" fill="#e94b44"/>
        <path d="M48.500 265h78.500v12.500H48.500z" fill="none" stroke="#e94b44" stroke-width="2"/>
    </svg>
</body>
</html>
```

FILE: styles.css
```css
* {
    box-sizing: border-box;
}

body {
    margin: 0;
    height: 100vh;
    display: flex;
    flex-direction: column;
    overflow: hidden;
    position: relative;
    background: #fff;
    color: #111;
    font-family: "Open Sans", "Noto Sans", sans-serif;
    font-size: 7px;
    line-height: 10px;
}

button, select {
    font: inherit;
    color: inherit;
    border: 0;
    padding: 0;
    margin: 0;
    background: none;
    appearance: none;
}

.defs {
    position: absolute;
    width: 0;
    height: 0;
}

.hidden {
    display: none;
}

/* title and menu */
.titlebar {
    height: 14px;
    display: flex;
    align-items: center;
    gap: 3px;
    flex: none;
}

.app-icon {
    width: 10px;
    height: 12px;
}

.menubar {
    height: 12px;
    display: flex;
    align-items: center;
    gap: 10px;
    flex: none;
    background: #f6f6f6;
}

.menubar a {
    color: inherit;
    text-decoration: none;
    font-weight: 500;
}

.menu-icon {
    width: 9px;
    height: 8px;
    margin-right: -5px;
}

/* toolbars */
.toolbar {
    height: 18px;
    display: flex;
    align-items: center;
    flex: none;
    background: #f6f6f6;
    border-bottom: 1px solid #e6e6e6;
}

.toolbar > button {
    flex: 1 1 15px;
    min-width: 0;
    height: 16px;
    display: flex;
    align-items: center;
    justify-content: center;
}

.toolbar > button svg {
    width: 12px;
    height: 12px;
    flex: none;
}

.toolbar > .drop {
    flex: 0 0 8px;
}

.toolbar > .drop svg {
    width: 6px;
}

.toolbar > .on {
    background: #c4def5;
    box-shadow: inset 0 0 0 1px #98c5ed;
}

.view {
    border-bottom: 0;
}

.view > button {
    flex: 0 0 16px;
}

.view > .marked {
    flex: 0 0 21px;
    height: 18px;
    border: 2px solid #e94b44;
}

.icon-text {
    font-size: 8px;
    font-weight: 700;
}

.grip {
    flex: 0 0 6px;
    height: 12px;
    background: radial-gradient(circle at 2px 1px, #b5b5b5 1px, transparent 1px) 0 0 / 6px 3px;
}

.sep {
    flex: 0 0 5px;
    height: 12px;
    background: linear-gradient(#ccc, #ccc) center / 1px 100% no-repeat;
}

.loadcase, .coord {
    display: flex;
    align-items: center;
    height: 14px;
    background: #e7e7f4;
    font-weight: 500;
}

.loadcase {
    flex: 0 0 191px;
    gap: 2px;
    padding-left: 3px;
}

.loadcase label {
    width: 18px;
    border-right: 1px solid #f6f6f6;
    padding-left: 2px;
}

.loadcase select {
    flex: 1;
    min-width: 0;
    padding-left: 3px;
    height: 14px;
}

.chevron {
    width: 8px;
    height: 8px;
    margin-right: 3px;
    pointer-events: none;
}

.loadcase button {
    width: 8px;
    height: 14px;
    display: flex;
    align-items: center;
}

.loadcase button svg {
    width: 7px;
    height: 7px;
}

.swatch {
    width: 7px;
    height: 7px;
    flex: none;
    background: #c8fbfd;
}

.badge {
    width: 19px;
    line-height: 9px;
    text-align: center;
    color: #fff;
    background: #c0494c;
}

.coord {
    flex: 0 0 45px;
    gap: 4px;
    padding-left: 2px;
    overflow: hidden;
}

/* navigator */
.workspace {
    flex: 1;
    min-height: 0;
    display: flex;
}

.navigator {
    flex: 0 0 173px;
    min-width: 0;
    display: flex;
    flex-direction: column;
    border-left: 1px solid #c5c5d5;
    border-right: 2px solid #c9c9d9;
    background: #fff;
}

.nav-head {
    height: 13px;
    flex: none;
    display: flex;
    align-items: center;
    gap: 5px;
    padding: 0 3px 0 1px;
    background: #d8e6f3;
    font-weight: 600;
}

.nav-head span {
    flex: 1;
}

.nav-head button {
    width: 8px;
    height: 8px;
}

.nav-head svg {
    display: block;
}

.nav-body {
    flex: 1;
    min-height: 0;
    display: flex;
}

.tree {
    flex: 1;
    min-width: 0;
    display: flex;
    flex-direction: column;
    list-style: none;
    margin: 2px 0 -4px;
    padding: 0;
}

.tree li {
    flex: 1 1 0;
    min-height: 0;
    display: flex;
    align-items: center;
    gap: 3px;
    padding-left: 2px;
    white-space: nowrap;
}

.tree .d1 { padding-left: 15px; }
.tree .d2 { padding-left: 28px; }
.tree .d3 { padding-left: 41px; }

.tree label {
    display: flex;
    align-items: center;
    gap: 2px;
}

.tree input {
    appearance: none;
    position: relative;
    width: 9px;
    height: 9px;
    margin: 0;
    border: 1px solid #444;
    background: #fff;
}

.tree input:checked::before {
    content: "";
    position: absolute;
    left: 2px;
    top: 0;
    width: 3px;
    height: 5px;
    border: solid #333;
    border-width: 0 1px 1px 0;
    transform: rotate(40deg);
}

.tree .part {
    background: #bfe0fb;
    border-color: #4791cf;
}

.tree .off {
    color: #8b8b8b;
}

.tree .off .ic {
    filter: grayscale(1);
    opacity: .6;
}

.tree .off input {
    border-color: #ccc;
}

.selected {
    background: linear-gradient(#cce8ff, #cce8ff) 61px 0 no-repeat;
}

.tw {
    width: 7px;
    height: 7px;
    flex: none;
}

.ic {
    width: 11px;
    height: 11px;
    flex: none;
}

.scrollbar {
    flex: 0 0 10px;
    display: flex;
    flex-direction: column;
    background: #f0f0f0;
    margin-right: 1px;
}

.scrollbar svg {
    width: 10px;
    height: 12px;
    flex: none;
}

.thumb {
    flex: 416;
    background: #cdcdcd;
}

.rest {
    flex: 49;
}

/* model view */
.viewport {
    flex: 1;
    min-width: 0;
}

.viewport svg {
    display: block;
    width: 100%;
    height: 100%;
}

.callouts {
    position: absolute;
    left: 0;
    top: 0;
    width: 760px;
    height: 570px;
    pointer-events: none;
    filter: drop-shadow(1px 2px 1px rgba(0, 0, 0, .4));
}
```
